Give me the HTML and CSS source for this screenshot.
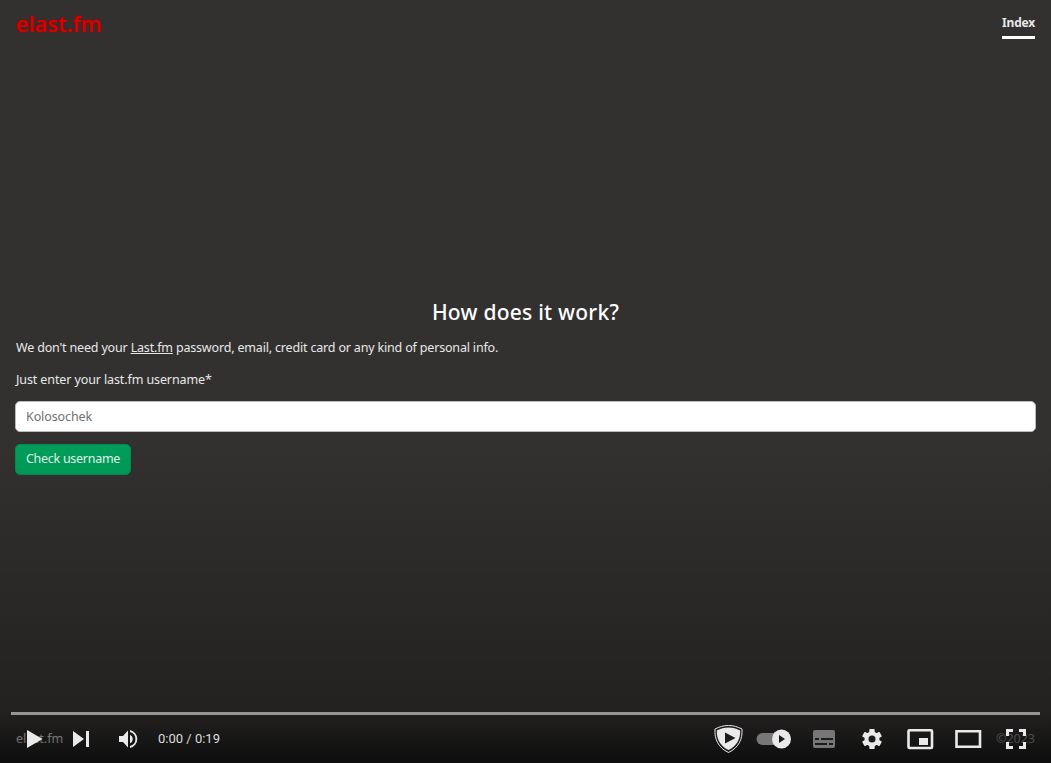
FILE: index.html
```html
<!DOCTYPE html>
<html lang="en">
<head>
<meta charset="utf-8">
<title>elast.fm</title>
<link rel="stylesheet" href="styles.css">
</head>
<body>
<div class="page">
  <header class="header">
    <span class="brand">elast.fm</span>
    <a class="nav-link">Index</a>
  </header>
  <main class="content">
    <h1 class="title">How does it work?</h1>
    <p class="intro">We don't need your <a class="link">Last.fm</a> password, email, credit card or any kind of personal info.</p>
    <label class="label" for="user">Just enter your last.fm username*</label>
    <input class="field" id="user" placeholder="Kolosochek">
    <button class="submit"><span>Check username</span></button>
  </main>
  <footer class="footer"><span class="foot-name">elast.fm</span><span class="foot-year">©2023</span></footer>
</div>
<div class="player">
  <div class="progress"></div>
  <div class="controls">
    <svg class="btn narrow" viewBox="0 0 46 48"><path d="M16 15l15.500 9L16 33z"/></svg>
    <svg class="btn narrow" viewBox="0 0 46 48"><path d="M16 16l11 8-11 8zM29 16h3v16h-3z"/></svg>
    <svg class="btn narrow" viewBox="0 0 46 48"><path d="M16 21v6h4l5 5.500v-17L20 21zM27 19.700v8.600a4.700 4.700 0 0 0 0-8.600zM27 15v2.100a7.100 7.100 0 0 1 0 13.800V33a9.200 9.200 0 0 0 0-18z"/></svg>
    <span class="time">0:00 / 0:19</span>
    <span class="spacer"></span>
    <svg class="btn" viewBox="0 0 48 48"><path class="shield-edge" d="M24.500 10.500c5 0 9 1.300 13.500 3.500.8 10-3.500 19-13.500 23.500C14.500 33 10.200 24 11 14c4.500-2.200 8.500-3.500 13.500-3.500z"/><path d="M24.500 12.500c4.300 0 7.900 1 11.700 2.900.3 8.300-3.400 15.600-11.700 19.700-8.300-4.100-12-11.400-11.700-19.700 3.800-1.900 7.400-2.900 11.700-2.900z"/><path class="dark" d="M21 17.500l10.500 5.500L21 28.500z"/></svg>
    <svg class="btn" viewBox="0 0 48 48"><rect class="dim" x="4.500" y="18" width="28" height="12" rx="6"/><circle cx="29.500" cy="24" r="9.500"/><path class="dark" d="M27 20l6 4-6 4z"/></svg>
    <svg class="btn" viewBox="0 0 48 48"><rect class="dim" x="13" y="15" width="22" height="18" rx="2"/><path class="dark" d="M15 23h4v2h-4zM21 23h12v2H21zM15 28h12v2H15zM29 28h4v2h-4z"/></svg>
    <svg class="btn" viewBox="0 0 48 48"><g id="gear"><rect x="21.300" y="14" width="5.400" height="20" rx=".8"/><rect x="21.300" y="14" width="5.400" height="20" rx=".8" transform="rotate(60 24 24)"/><rect x="21.300" y="14" width="5.400" height="20" rx=".8" transform="rotate(120 24 24)"/><circle cx="24" cy="24" r="7.500"/></g><circle class="dark" cx="24" cy="24" r="3.500"/></svg>
    <svg class="btn" viewBox="0 0 48 48"><rect class="line pip" x="12.500" y="15.300" width="23.500" height="17.700" rx="1"/><path d="M23 23h9v7h-9z"/></svg>
    <svg class="btn" viewBox="0 0 48 48"><path class="line pip" d="M12.500 16.300h23.500v15.400h-23.500z"/></svg>
    <svg class="btn" viewBox="0 0 48 48"><path class="line" d="M15.500 21v-5.500H21M27 15.500h5.500V21M32.500 27v5.500H27M21 32.500h-5.500V27"/></svg>
  </div>
</div>
</body>
</html>
```
FILE: styles.css
```css
* { box-sizing: border-box; }
body { margin: 0; height: 763px; overflow: hidden; position: relative; background: #333130; color: #e8e8e8; font: 12.500px/20px "Noto Sans", sans-serif; }
.page { height: 763px; padding: 0 16px; display: flex; flex-direction: column; }
.header { height: 48px; display: flex; justify-content: space-between; align-items: flex-start; }
.brand { margin-top: 8px; font-size: 22px; line-height: 30px; font-weight: 500; letter-spacing: .1px; color: #d90000; text-shadow: 0 0 2px #a00000, 0 0 1px #a00000; }
.nav-link { margin-top: 13px; height: 26px; font-weight: 700; border-bottom: 3px solid #fff; font-size: 12px; letter-spacing: -.2px; }
.content { flex: 1; display: flex; flex-direction: column; align-items: flex-start; padding-top: 250px; }
.title { margin: 0; align-self: center; font-size: 21px; line-height: 28px; font-weight: 500; letter-spacing: .24px; color: #fff; }
.intro { margin: 12px 0; white-space: nowrap; letter-spacing: -.175px; }
.label { letter-spacing: -.11px; }
.link { text-decoration: underline; }
.field { margin: 11px 0 12px -1px; width: 1021px; height: 31px; padding: 0 10px; border: 1px solid #bbb; border-radius: 5px; background: #fff; font: inherit; letter-spacing: -.1px; }
.field::placeholder { color: #6f7072; opacity: 1; }
.submit { margin-left: -1px; width: 116px; height: 31px; padding: 0 10px 1px; border: 1px solid #078a50; border-radius: 5px; background: #009e5a; color: #e1f7ec; font: inherit; letter-spacing: -.28px; text-align: left; white-space: nowrap; }
.footer { height: 48px; display: flex; justify-content: space-between; align-items: center; color: #aaa; }
.foot-name { color: #f0f0f0; }
.foot-year { color: #a0a0a0; }
.player { position: absolute; inset: 440px 0 0; display: flex; flex-direction: column; justify-content: flex-end; background: linear-gradient(transparent, rgba(0,0,0,.32) 84%, rgba(0,0,0,.72)); }
.progress { height: 3px; margin: 0 11px; background: #969696; }
.controls { height: 48px; padding: 0 11px; display: flex; align-items: center; }
.btn { width: 48px; height: 48px; flex: none; fill: #eaeaea; }
.narrow { width: 46px; }
.time { margin-left: 9px; font: 13px/48px Roboto, sans-serif; color: #ddd; }
.spacer { flex: 1; }
.dark { fill: #1c1c1c; }
.dim { fill: #777; }
.line { fill: none; stroke: #eaeaea; stroke-width: 3; }
.pip { stroke-width: 2.600; }
.shield-edge { fill: #1c1c1c; stroke: #eaeaea; stroke-width: 1; }
```
